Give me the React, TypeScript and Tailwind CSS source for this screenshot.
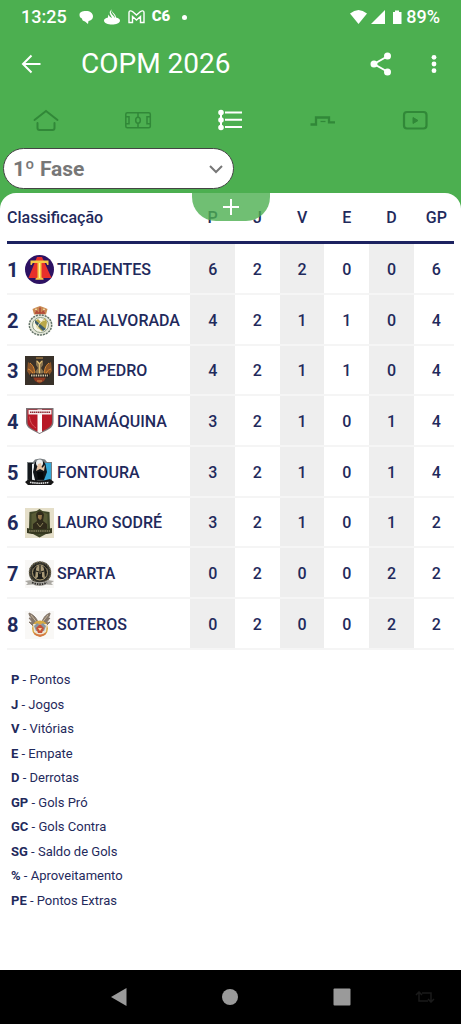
import type { ReactNode } from 'react'

interface Team {
  name: string
  crest: ReactNode
  stats: number[]
}

const columns = ['P', 'J', 'V', 'E', 'D', 'GP']

const legend = [
  ['P', 'Pontos'],
  ['J', 'Jogos'],
  ['V', 'Vitórias'],
  ['E', 'Empate'],
  ['D', 'Derrotas'],
  ['GP', 'Gols Pró'],
  ['GC', 'Gols Contra'],
  ['SG', 'Saldo de Gols'],
  ['%', 'Aproveitamento'],
  ['PE', 'Pontos Extras'],
]

function Crest({ children }: { children: ReactNode }) {
  return (
    <svg className="size-[30px] shrink-0" viewBox="0 0 30 30" aria-hidden="true">
      {children}
    </svg>
  )
}

function TiradentesCrest() {
  return (
    <Crest>
      <circle cx="14.5" cy="14.5" r="14.5" fill="#2d1263" />
      <path d="M12 2h5l9.500 21h-23Z" fill="#e8302b" />
      <path d="M5.500 5.500h18v4.500h-1.200l-1-2H16.500v14.500l2 1v1.200h-8v-1.200l2-1V8H7.700l-1 2H5.500Z" fill="#f6c945" />
      <path d="M14.500 8v15" stroke="#fff0a0" />
    </Crest>
  )
}

function RealCrest() {
  return (
    <Crest>
      <path d="M9 8.500 7.500 3 11 1.500 15 0l4 1.500L22.500 3 21 8.500Z" fill="#c98a52" />
      <path d="M10 7h10M10.500 4l2 2M15 1.500V7M19.500 4l-2 2" stroke="#b0443a" strokeWidth="1.500" />
      <circle cx="11" cy="3.500" r="1" fill="#f0dca5" />
      <circle cx="19" cy="3.500" r="1" fill="#f0dca5" />
      <ellipse cx="15.500" cy="19" rx="12" ry="10.800" fill="#e4e7da" />
      <ellipse cx="15.500" cy="19" rx="11.200" ry="10" fill="none" stroke="#5f6f67" strokeWidth="1.400" strokeDasharray="2 1" />
      <ellipse cx="15.500" cy="19" rx="8" ry="7.500" fill="#f7f6e8" stroke="#8b9b83" />
      <path d="m10 15 3-2 3 3 4-4 2 4-1 6-4 3-5-3Z" fill="#b9a94a" />
      <path d="m10 14 11 9-3 2-8-8Z" fill="#3d5d6a" />
      <path d="M12 22c2-5 4-7 8-8M10 18l5 6" stroke="#f4edc7" fill="none" />
    </Crest>
  )
}

function DomPedroCrest() {
  return (
    <Crest>
      <path d="M0 0h29v29H0Z" fill="#393129" />
      <path d="M3 6c3 2 6 4 7 10l-4 5-4-6Zm23 0c-3 2-6 4-7 10l4 5 4-6Z" fill="#8a5529" />
      <path
        d="M5 7c4 3 5 7 4 12M24 7c-4 3-5 7-4 12M3 13c4 1 5 4 6 8M26 13c-4 1-5 4-6 8"
        stroke="#dd8b35"
        fill="none"
      />
      <path d="m11 4 3.500 3L18 4v5l-2 3 3 4-4.500 5-4.500-5 3-4-2-3Z" fill="#8a744f" />
      <path d="m12 5 2.500 3L17 5M14.500 8v11" stroke="#e0bc72" strokeWidth="1.200" fill="none" />
      <path d="M8 21h13l-2 4-4.500 2.500L10 25Z" fill="#8f3a22" />
      <path d="M5 17.500h19v4H5Z" fill="#251f1c" />
      <path d="M6 19.500h17" stroke="#d5c6a5" strokeWidth="1.800" strokeDasharray="1.500 .8" />
      <path d="M11 2h7M12 25h5" stroke="#cd9851" />
    </Crest>
  )
}

function DinamaquinaCrest() {
  return (
    <Crest>
      <path d="M1 1h27.500v14c0 6-6 8-14 12C7 23 1 21 1 15Z" fill="#7d7376" />
      <path d="M2.500 2.500h24.500V15c0 5-5 7-12.500 10.500C7 22 2.500 20 2.500 15Z" fill="#b71926" />
      <path d="M12.500 2.500h4.500V25l-2.500 1-2-1Z" fill="#fff" />
      <path d="M3.500 3h23v4.500h-23Z" fill="#f5eeee" />
      <path d="M5 5.200h20" stroke="#8e2830" strokeWidth="1.600" strokeDasharray="1.400 .5" />
      <path d="M4.500 9.500c.5 6 3 9 6.500 11.500" stroke="#d95a5e" fill="none" />
    </Crest>
  )
}

function FontouraCrest() {
  return (
    <Crest>
      <path d="M2 4h6l2-2.500 5-1 5 1L22 4h5v19l-3 3H5l-3-3Z" fill="#777d80" />
      <path d="M3 5h7l2 19H6l-3-3Z" fill="#15191d" />
      <path d="M19 5h7v17l-3 3h-5Z" fill="#35a6d5" />
      <path d="m7 6 3-1v18l-3-1Z" fill="#e9edef" />
      <path d="M9 9c-1-9 12-9 12 0l1 5-3 8h-9l-2-8Z" fill="#111519" />
      <circle cx="14.500" cy="5" r="3.500" fill="#eceeee" />
      <path d="m11 13 2-7 3-1 1 5 3-3-1 6-4-2Z" fill="#e6c3a4" />
      <path d="M12 14h6l1 7h-6Z" fill="#05080a" />
      <path d="m0 24 4-3c7 2 14 2 21 0l4 3-3 3H3Z" fill="#171717" />
      <path d="M5 24.300q10 1.800 19 0" stroke="#e3e3e3" strokeWidth="1.600" strokeDasharray="1.500 .6" fill="none" />
    </Crest>
  )
}

function LauroCrest() {
  return (
    <Crest>
      <path d="M0 0h29v30H0Z" fill="#e5dfc9" />
      <path d="m14.500 1 3 2 7 1 .5 17-4 5-6.500 3.500L8 26l-4-5L4.500 4l7-1Z" fill="#3f4628" />
      <path d="m14.500 3 8 3v15l-8 6-8-6V6Z" fill="#585b35" />
      <path d="M11 7c1-5 7-5 8 0l-1 6 4 3v6H8v-6l4-3Z" fill="#302b1b" />
      <path d="M13 7h4l-.5 4-1.500 1-2-2Z" fill="#94764c" />
      <path d="m12 15 3 4 3-4" stroke="#877f56" fill="none" />
      <path d="m2 20 5 1h15l5-1v5l-5 1H7l-5-1Z" fill="#363820" />
      <path d="M4 23h21" stroke="#a89f78" strokeWidth="1.200" strokeDasharray="1.500 .7" />
    </Crest>
  )
}

function SpartaCrest() {
  return (
    <Crest>
      <path d="M0 1h29v28H0Z" fill="#f8f7f5" />
      <circle cx="15" cy="13.500" r="11" fill="#33322b" />
      <circle cx="15" cy="13.500" r="10.500" fill="none" stroke="#68614b" strokeWidth="1.500" strokeDasharray="2 1" />
      <circle cx="15" cy="13.500" r="7.500" fill="#1e1e1a" stroke="#b0a078" />
      <path d="m10 20 1-10c1-5 7-5 8 0l1 10-3-2v-5l-2 2-2-2v5Z" fill="#a89976" />
      <path d="M15 6v8M11 12l3 1m5-1-3 1M8 9l3-3m8 0 3 3" stroke="#1d1d19" strokeWidth="1.200" />
      <path d="m0 22 6-1c5 3 12 3 17 0l6 1-3 2 2 2-7-.5c-5 2-9 2-13 0L1 26l2-2Z" fill="#aaa8a2" />
      <path d="M7 23.500q8 3.500 15 0" stroke="#302f2c" strokeWidth="1.800" strokeDasharray="1.500 1" fill="none" />
    </Crest>
  )
}

function SoterosCrest() {
  return (
    <Crest>
      <path d="M0 1h29v28H0Z" fill="#f9f8f6" />
      <path
        d="M14 15C12 8 9 5 4 3c0 3 2 4 3 6-2-1-2-1-3-1l4 5-4-1 5 5Zm2 0c2-7 4-10 9-12 0 3-2 5-3 6l3-1-4 5 4-1-5 5Z"
        fill="#85776a"
        stroke="#85776a"
      />
      <path d="m6 5 7 9m10-9-7 9" stroke="#c7b79b" />
      <circle cx="15" cy="18.500" r="8" fill="#d8aa42" />
      <path d="M8 14h14l-1 8-6 4-6-4Z" fill="#eee4d3" />
      <path d="m9 16 3-3 3 2 3-2 3 3-2 5h-8Z" fill="#8797a0" />
      <path d="m11 18 4-4 4 4-2 5h-4Z" fill="#c65339" />
      <path d="M13 18h4l-2 3Z" fill="#f4d493" />
      <path d="M8 22q7 5 14 0l-2 3-5 2-5-2Z" fill="#d57943" />
    </Crest>
  )
}

const teams: Team[] = [
  { name: 'TIRADENTES', crest: <TiradentesCrest />, stats: [6, 2, 2, 0, 0, 6] },
  { name: 'REAL ALVORADA', crest: <RealCrest />, stats: [4, 2, 1, 1, 0, 4] },
  { name: 'DOM PEDRO', crest: <DomPedroCrest />, stats: [4, 2, 1, 1, 0, 4] },
  { name: 'DINAMÁQUINA', crest: <DinamaquinaCrest />, stats: [3, 2, 1, 0, 1, 4] },
  { name: 'FONTOURA', crest: <FontouraCrest />, stats: [3, 2, 1, 0, 1, 4] },
  { name: 'LAURO SODRÉ', crest: <LauroCrest />, stats: [3, 2, 1, 0, 1, 2] },
  { name: 'SPARTA', crest: <SpartaCrest />, stats: [0, 2, 0, 0, 2, 2] },
  { name: 'SOTEROS', crest: <SoterosCrest />, stats: [0, 2, 0, 0, 2, 2] },
]

function StatusBar() {
  return (
    <div className="flex h-[34px] items-center justify-between px-[21px] text-lg font-medium">
      <div className="flex items-center">
        <span>13:25</span>
        <svg className="ml-3 h-4 w-[66px]" viewBox="0 0 66 16" fill="#fff" aria-hidden="true">
          <path d="M.5 6C.5 3 3 2 7 2s7 2 7 5.500c0 2.500-2 4-4.500 4.500L9 15l-3-2.500C4 12 3 11 3 9.500 1.500 9 .5 8 .5 6Z" />
          <path d="M32.500 0c-1.500 3 3.500 5 3.500 9-1.500-3-5-4-4-8-3 3 0 5 1 8-2-1-3-2-3.500-3.500C29 7 29 8 29 8.500c-2.500.5-4 1.500-4 3.200 0 2.300 4 3.800 8 3.800s8-1.500 8-3.800c0-1.700-1.500-2.700-4-3.200 0-4-5-5-4.500-8.500Z" />
          <path
            d="M50 13.500V3.500C50 1.500 52 1.500 53.500 2.500L57.500 6l4-3.500C63 1.500 65 1.500 65 3.500v10h-3.500V7.500l-4 3.500-4-3.500v6Z"
            fill="none"
            stroke="#fff"
            strokeWidth="1.400"
          />
        </svg>
        <span className="ml-[7px] text-[15px] font-black">C6</span>
        <span className="ml-3 size-[5px] rounded-full bg-white" />
      </div>
      <div className="flex items-center gap-[2px]">
        <svg className="h-4 w-[54px]" viewBox="0 0 54 16" fill="#fff" aria-hidden="true">
          <path d="M0 4.500Q8.500-2.500 17 4.500L8.500 15Z" />
          <path d="M35 1v14H21Z" />
          <path d="M43 3h2V1.500h4V3h2.500v12H43Z" />
        </svg>
        <span>89%</span>
      </div>
    </div>
  )
}

function AppBar() {
  return (
    <div className="flex h-[60px] items-center pr-[15px] pl-[21px]">
      <button type="button" aria-label="Voltar">
        <svg className="size-5" viewBox="0 0 20 20" fill="none" stroke="#fff" strokeWidth="2">
          <path d="M19.500 10H2.500M10.500 1.500 2 10l8.500 8.500" />
        </svg>
      </button>
      <h1 className="ml-10 flex-1 text-[28px] leading-8">COPM 2026</h1>
      <button type="button" aria-label="Compartilhar">
        <svg className="h-6 w-[22px]" viewBox="0 0 22 24" fill="#fff" stroke="#fff" strokeWidth="2">
          <path d="M18 4 4 12l14 8" fill="none" />
          <circle cx="17.500" cy="4" r="2.500" />
          <circle cx="4" cy="12" r="2.500" />
          <circle cx="17.500" cy="20" r="2.500" />
        </svg>
      </button>
      <button type="button" aria-label="Mais opções" className="ml-[30px]">
        <svg className="h-5 w-6" viewBox="0 0 24 20" fill="#fff">
          <circle cx="12" cy="3.300" r="2.400" />
          <circle cx="12" cy="10" r="2.400" />
          <circle cx="12" cy="16.700" r="2.400" />
        </svg>
      </button>
    </div>
  )
}

function TabLink({ label, active, children }: { label: string; active?: boolean; children: ReactNode }) {
  return (
    <a
      href="#"
      aria-label={label}
      className={active ? 'flex items-center justify-center text-white' : 'flex items-center justify-center text-[#318838]'}
    >
      <svg className="h-6 w-7" viewBox="0 0 28 24" fill="none" stroke="currentColor" strokeWidth="2">
        {children}
      </svg>
    </a>
  )
}

function Tabs() {
  return (
    <nav className="grid h-[52px] grid-cols-5">
      <TabLink label="Início">
        <path d="M2.500 12 14 3l11.500 9M5.500 15v5q0 2 2 2h13q2 0 2-2v-5" strokeLinecap="round" />
      </TabLink>
      <TabLink label="Jogos">
        <g strokeWidth="1.500">
          <rect x="1.800" y="4.800" width="24.500" height="15" rx="1.500" />
          <path d="M14 5v4.500M14 15.500V20M2 8.800h3v7H2M26 8.800h-3v7h3" />
          <ellipse cx="14" cy="12.300" rx="2.300" ry="3" />
        </g>
      </TabLink>
      <TabLink label="Classificação" active>
        <path d="M9 4.500h17M9 11.800h17M9 19h17M5 4.500v15" />
        <circle cx="5" cy="4.500" r="1.800" fill="currentColor" />
        <circle cx="5" cy="12" r="1.800" fill="currentColor" />
        <circle cx="5" cy="19.500" r="1.800" fill="currentColor" />
      </TabLink>
      <TabLink label="Chaves">
        <path d="M1.500 16.500h5.500V9.500h13v4.800h6" strokeWidth="2.300" />
        <path d="M11.500 13.500h5" strokeWidth="1.200" />
      </TabLink>
      <TabLink label="Vídeos">
        <rect x="3" y="4" width="22.500" height="16.500" rx="3" strokeWidth="2.200" />
        <path d="m12 9.500 5 3-5 3Z" fill="currentColor" strokeWidth="1" />
      </TabLink>
    </nav>
  )
}

function PhaseSelect() {
  return (
    <div className="relative mt-[2px] ml-[3px] w-1/2">
      <select
        aria-label="Fase"
        className="block h-[41px] w-full appearance-none rounded-full border border-[#444] bg-white pl-[9px] text-[21px] leading-8 font-bold text-[#777]"
      >
        <option>1º Fase</option>
      </select>
      <svg
        className="pointer-events-none absolute top-4 right-[11px] h-[10px] w-[14px]"
        viewBox="0 0 14 10"
        fill="none"
        stroke="#777"
        strokeWidth="2"
        aria-hidden="true"
      >
        <path d="m1 2 6 6 6-6" />
      </svg>
    </div>
  )
}

function Standings() {
  return (
    <table className="w-full table-fixed border-separate border-spacing-0">
      <thead>
        <tr className="h-[51px] text-base">
          <th scope="col" className="border-b-3 border-[#1c2260] pt-[2px] text-left font-medium">
            Classificação
          </th>
          {columns.map((column) => (
            <th
              key={column}
              scope="col"
              className="w-[10%] border-b-3 border-[#1c2260] pt-[2px] font-medium last:w-[9%] last:pl-[5px]"
            >
              {column}
            </th>
          ))}
        </tr>
      </thead>
      <tbody>
        {teams.map((team, index) => (
          <tr key={team.name} className="h-[51px] nth-[3n]:h-[50px]">
            <th scope="row" className="border-b-2 border-[#f5f5f5] pt-[2px] text-left font-medium">
              <div className="flex items-center">
                <span className="w-[18px] text-xl font-bold">{index + 1}</span>
                {team.crest}
                <span className="ml-[2px] whitespace-nowrap">{team.name}</span>
              </div>
            </th>
            {team.stats.map((stat, i) => (
              <td
                key={columns[i]}
                className="border-b-2 border-[#f5f5f5] bg-clip-padding pt-[2px] text-center font-medium last:pl-[5px] even:bg-[#eee]"
              >
                {stat}
              </td>
            ))}
          </tr>
        ))}
      </tbody>
    </table>
  )
}

function NavigationBar() {
  return (
    <div className="grid h-[54px] grid-cols-[1fr_auto_1fr] items-center bg-black text-[#9a9a9a]">
      <div className="col-start-2 flex items-center gap-[95px]">
        <button type="button" aria-label="Anterior">
          <svg className="h-[18px] w-4" viewBox="0 0 16 18" fill="currentColor">
            <path d="M15.500 0v18L0 9Z" />
          </svg>
        </button>
        <button type="button" aria-label="Tela inicial">
          <svg className="size-4" viewBox="0 0 16 16" fill="currentColor">
            <circle cx="8" cy="8" r="8" />
          </svg>
        </button>
        <button type="button" aria-label="Recentes">
          <svg className="size-[18px]" viewBox="0 0 18 18" fill="currentColor">
            <rect x="0.500" y="0.500" width="17" height="17" rx="1" />
          </svg>
        </button>
      </div>
      <button type="button" aria-label="Girar tela" className="ml-16 justify-self-start">
        <svg className="h-3 w-5" viewBox="0 0 20 12" fill="none" stroke="#1a1a1a" strokeWidth="1.500">
          <path d="M7 2h9v8M13 10H4V2M1 4l3-3 3 3M13 8l3 3 3-3" />
        </svg>
      </button>
    </div>
  )
}

export default function App() {
  return (
    <div className="flex min-h-screen flex-col bg-[#4caf50] font-[Roboto,sans-serif] text-[#1f2a5c]">
      <header className="pb-1 text-white">
        <StatusBar />
        <AppBar />
        <Tabs />
        <PhaseSelect />
      </header>
      <main className="relative flex-1 rounded-t-2xl bg-white px-[7px]">
        <button
          type="button"
          aria-label="Mostrar mais"
          className="absolute top-0 left-1/2 flex h-7 w-[78px] -translate-x-1/2 items-center justify-center rounded-b-3xl bg-[#4caf50]/80"
        >
          <svg className="size-4" viewBox="0 0 16 16" stroke="#fff" strokeWidth="2">
            <path d="M8 0v16M0 8h16" />
          </svg>
        </button>
        <Standings />
        <ul className="mt-5 ml-1 pb-10 text-[13px] leading-5">
          {legend.map(([key, text]) => (
            <li key={key} className="odd:h-[25px] even:h-6">
              <b>{key}</b> - {text}
            </li>
          ))}
        </ul>
      </main>
      <NavigationBar />
    </div>
  )
}
